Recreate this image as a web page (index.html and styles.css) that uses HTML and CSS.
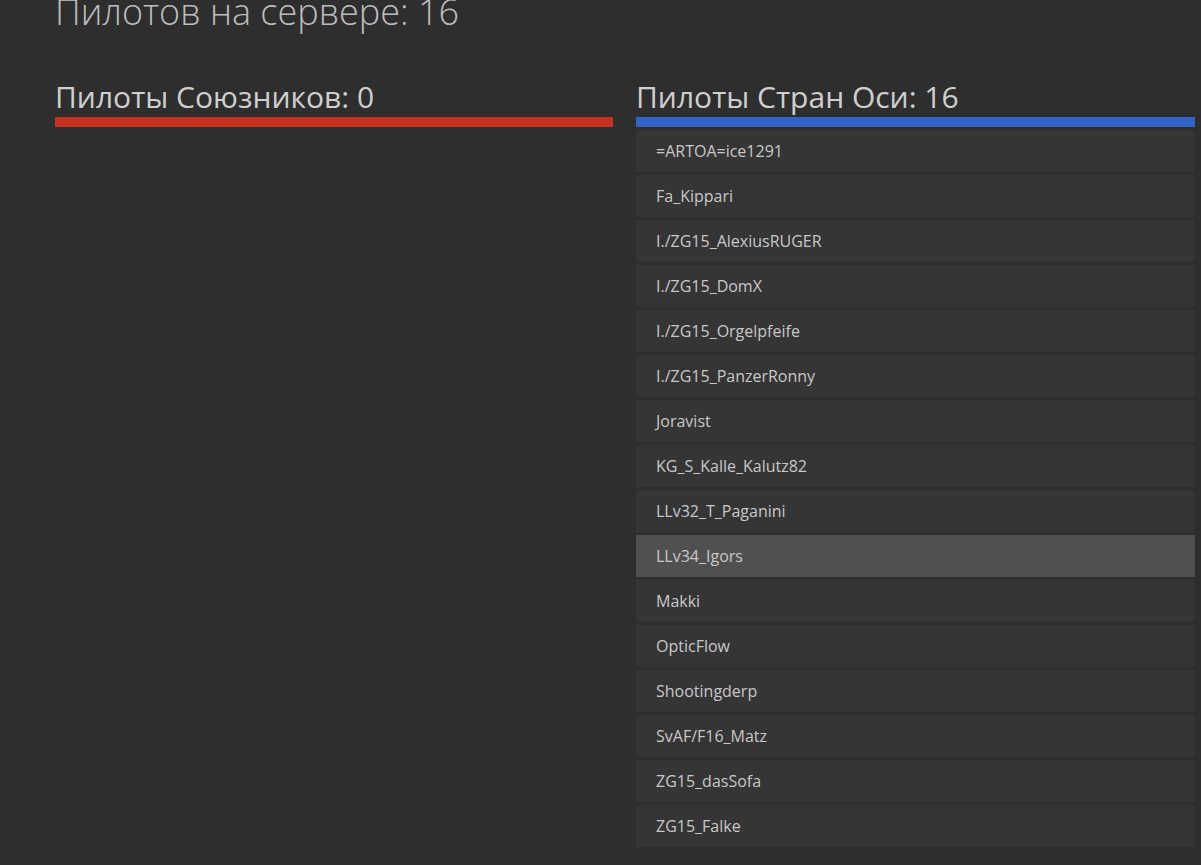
FILE: index.html
```html
<!DOCTYPE html>
<html lang="ru">
<head>
  <meta charset="UTF-8" />
  <meta name="viewport" content="width=device-width, initial-scale=1.0" />
  <title>Пилоты на сервере</title>
  <link rel="stylesheet" href="styles.css">
</head>
<body>
  <div class="container">
    <h1 class="total">Пилотов на сервере: 16</h1>
    <div class="sides">
      <div class="side allies">
        <h2>Пилоты Союзников: 0</h2>
        <ul class="pilots"></ul>
      </div>
      <div class="side axis">
        <h2>Пилоты Стран Оси: 16</h2>
        <ul class="pilots">
          <li>=ARTOA=ice1291</li>
          <li>Fa_Kippari</li>
          <li>I./ZG15_AlexiusRUGER</li>
          <li>I./ZG15_DomX</li>
          <li>I./ZG15_Orgelpfeife</li>
          <li>I./ZG15_PanzerRonny</li>
          <li>Joravist</li>
          <li>KG_S_Kalle_Kalutz82</li>
          <li>LLv32_T_Paganini</li>
          <li class="active">LLv34_Igors</li>
          <li>Makki</li>
          <li>OpticFlow</li>
          <li>Shootingderp</li>
          <li>SvAF/F16_Matz</li>
          <li>ZG15_dasSofa</li>
          <li>ZG15_Falke</li>
        </ul>
      </div>
    </div>
  </div>
</body>
</html>
```

FILE: styles.css
```css
html, body {
  margin: 0;
  padding: 0;
  background-color: #2e2e2e;
  height: 100%;
  overflow: hidden;
}
body {
  color: #cccccc;
  font-family: 'Open Sans', 'Noto Sans', sans-serif;
}
.container {
  width: 1140px;
  padding-left: 55px;
}
.total {
  margin: -6px 0 0 0;
  font-size: 36px;
  font-weight: 300;
  line-height: 1;
  color: #bdbdbd;
}
.sides {
  display: grid;
  grid-template-columns: 558px 559px;
  column-gap: 23px;
  margin-top: 52px;
}
.side h2 {
  margin: 0;
  padding-bottom: 5px;
  font-size: 30px;
  font-weight: 400;
  line-height: 1;
  color: #cfcfcf;
}
.allies h2 {
  border-bottom: 10px solid #c8301f;
}
.axis h2 {
  border-bottom: 10px solid #3163c9;
}
.pilots {
  list-style: none;
  margin: 3px 0 0 0;
  padding: 0;
}
.pilots li {
  height: 42px;
  line-height: 42px;
  padding: 0 20px;
  margin-bottom: 3px;
  background-color: #353535;
  font-size: 16px;
  color: #c8c8c8;
}
.pilots li.active {
  background-color: #505050;
}
```
